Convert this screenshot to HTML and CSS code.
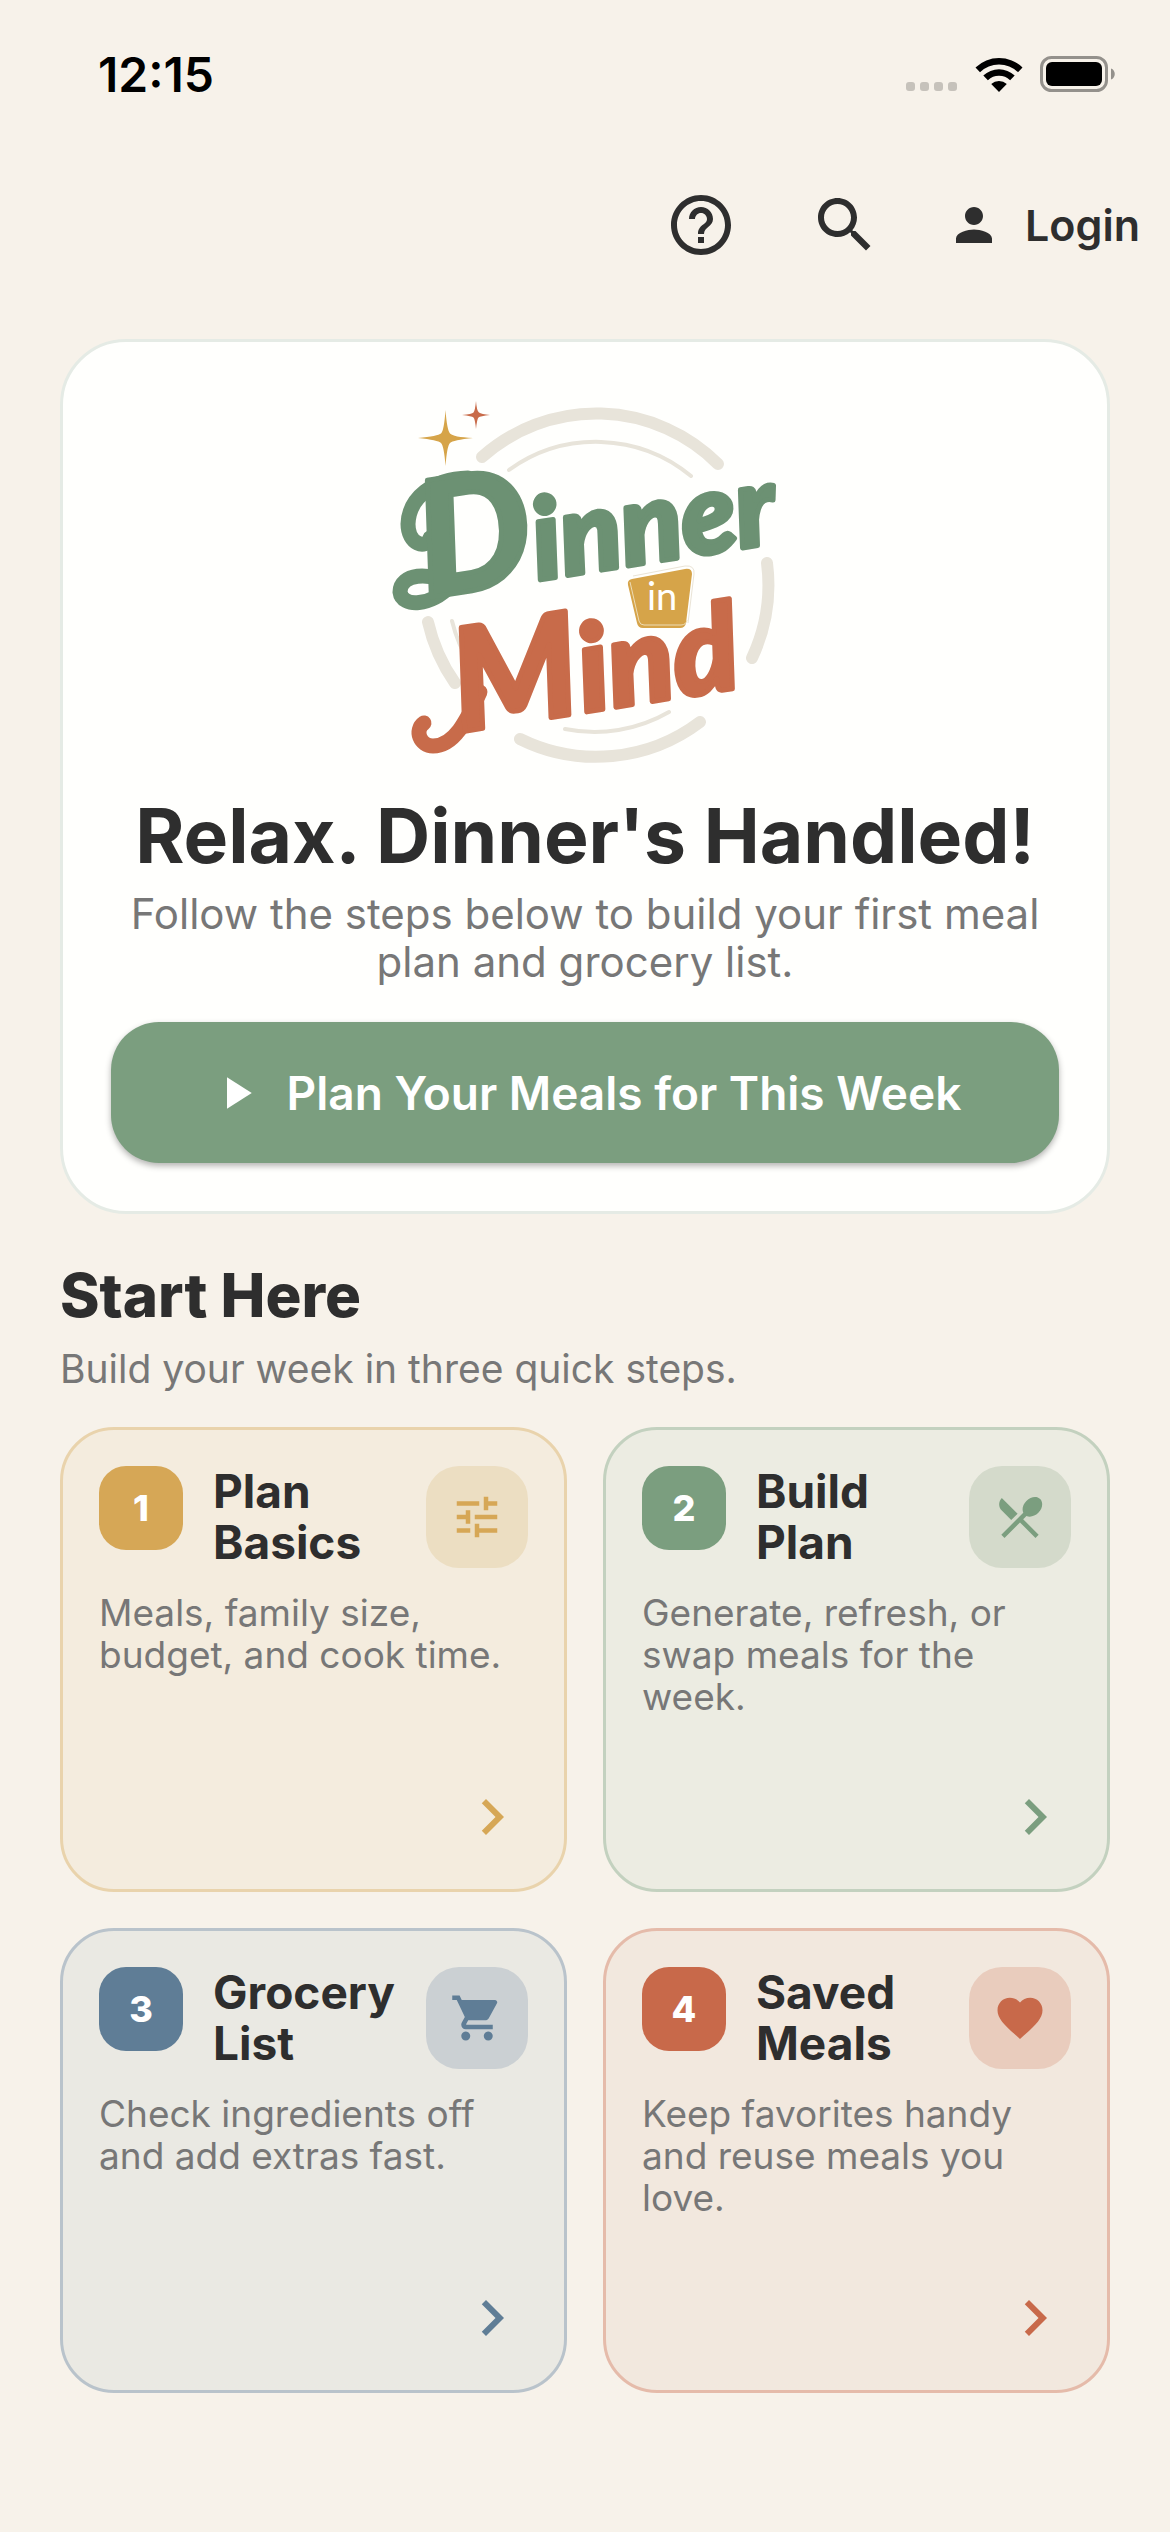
FILE: index.html
```html
<!DOCTYPE html>
<html lang="en">
<head>
<meta charset="utf-8">
<meta name="viewport" content="width=device-width, initial-scale=1">
<title>Dinner in Mind</title>
<link rel="stylesheet" href="styles.css">
</head>
<body>
<div class="status-bar">
  <time class="status-time">12:15</time>
  <div class="status-icons">
    <svg class="signal" viewBox="0 0 52 10" aria-hidden="true"><rect width="9" height="9" rx="3"/><rect x="14" width="9" height="9" rx="3"/><rect x="28" width="9" height="9" rx="3"/><rect x="42" width="9" height="9" rx="3"/></svg>
    <svg class="wifi" viewBox="0 0 50 36" aria-hidden="true"><path d="M1.500 11.500a34 34 0 0 1 47 0l-4.500 4.700a27.500 27.500 0 0 0-38 0zM9.300 19.500a23 23 0 0 1 31.400 0l-4.600 4.700a16.300 16.300 0 0 0-22.200 0zM17.200 28a11.500 11.500 0 0 1 15.600 0L25 36z"/></svg>
    <svg class="battery" viewBox="0 0 76 36" aria-hidden="true"><rect class="battery-case" x="1.500" y="1.500" width="65" height="33" rx="10"/><path class="battery-tip" d="M71 12.500c5 1.500 5 9.500 0 11z"/><rect x="6" y="6" width="56" height="24" rx="6"/></svg>
  </div>
</div>

<header class="app-bar">
  <button class="icon-button" type="button" aria-label="Help"><svg class="icon-lg" viewBox="0 0 24 24" aria-hidden="true"><path d="M11 18h2v-2h-2v2zm1-16C6.480 2 2 6.480 2 12s4.480 10 10 10 10-4.480 10-10S17.520 2 12 2zm0 18c-4.410 0-8-3.590-8-8s3.590-8 8-8 8 3.590 8 8-3.590 8-8 8zm0-14c-2.210 0-4 1.790-4 4h2c0-1.100.9-2 2-2s2 .9 2 2c0 2-3 1.750-3 5h2c0-2.250 3-2.500 3-5 0-2.210-1.790-4-4-4z"/></svg></button>
  <button class="icon-button" type="button" aria-label="Search"><svg class="icon-lg" viewBox="0 0 24 24" aria-hidden="true"><path d="M15.500 14h-.79l-.28-.27C15.410 12.590 16 11.110 16 9.500 16 5.910 13.090 3 9.500 3S3 5.910 3 9.500 5.910 16 9.500 16c1.610 0 3.090-.59 4.230-1.570l.27.28v.79l5 4.990L20.490 19l-4.990-5zm-6 0C7.010 14 5 11.990 5 9.500S7.010 5 9.500 5 14 7.010 14 9.500 11.990 14 9.500 14z"/></svg></button>
  <button class="login-button" type="button"><svg class="icon-md" viewBox="0 0 24 24" aria-hidden="true"><path d="M12 12c2.210 0 4-1.790 4-4s-1.790-4-4-4-4 1.790-4 4 1.790 4 4 4zm0 2c-2.670 0-8 1.340-8 4v2h16v-2c0-2.660-5.330-4-8-4z"/></svg>Login</button>
</header>

<main class="page">
  <section class="hero">
    <svg class="logo" viewBox="0 10 430 384" role="img" aria-label="Dinner in Mind">
      <g class="plate">
        <path d="M112 77A172 172 0 0 1 348 84M397 183A172 172 0 0 1 382 278M330 342A172 172 0 0 1 150 359M85 303A172 172 0 0 1 58 242"/>
      </g>
      <g class="plate plate-inner">
        <path d="M139 90A149 149 0 0 1 321 96M299 332A149 149 0 0 1 195 349M100 284A149 149 0 0 1 82 241"/>
      </g>
      <path class="gold" d="M75.500 30Q77 50 80 53.500T103 58Q83 60 80 63T75.500 86Q74 66 71 63T48 58Q68 56 71 53.500T75.500 30z"/>
      <path class="terra" d="M106 21Q106.700 31 109 32.500T120 35Q110 36 108.500 37.500T106 49Q105 39 103.500 37.500T92 35Q102 34 103.500 32.500T106 21z"/>
      <path class="swash swash-green" d="M60 158C56 170 38 164 38 144C39 118 62 99 98 98M80 206C60 190 30 194 30 212C32 228 62 226 80 206"/>
      <path class="swash swash-terra" d="M54 343C44 350 50 366 63 366C84 366 96 342 110 312"/>
      <g class="lettering">
        <text class="word-green" transform="translate(56 218) rotate(-9)"><tspan class="cap-d">D</tspan><tspan class="lower-d">inner</tspan></text>
        <text class="word-terra" transform="translate(90 352) rotate(-9)"><tspan class="cap-m">M</tspan><tspan class="lower-m">ind</tspan></text>
      </g>
      <path class="cup-edge" d="M263 196L315 186Q325 185 324 194L318 243"/>
      <path class="gold" d="M262 199L315 189Q322 188 322 194L316 243Q315 248 310 248H273Q268 248 267 243L258 205Q257 200 262 199z"/>
      <path class="cup-line" d="M260 202L269 241Q270 245 274 245H311Q316 245 317 240"/>
      <text class="word-in" x="277" y="230">in</text>
    </svg>
    <h1 class="hero-title">Relax. Dinner's Handled!</h1>
    <p class="hero-text">Follow the steps below to build your first meal plan and grocery list.</p>
    <button class="primary-button" type="button"><svg class="icon-md" viewBox="0 0 24 24" aria-hidden="true"><path d="M8 5v14l11-7z"/></svg>Plan Your Meals for This Week</button>
  </section>

  <section class="start">
    <h2 class="start-title">Start Here</h2>
    <p class="start-text">Build your week in three quick steps.</p>
    <div class="steps">
      <a class="step step-gold" href="#basics">
        <div class="step-head">
          <span class="step-number">1</span>
          <h3 class="step-title">Plan Basics</h3>
          <span class="step-tile"><svg class="icon-md" viewBox="0 0 24 24" aria-hidden="true"><path d="M3 17v2h6v-2H3zM3 5v2h10V5H3zm10 16v-2h8v-2h-8v-2h-2v6h2zM7 9v2H3v2h4v2h2V9H7zm14 4v-2H11v2h10zm-6-4h2V7h4V5h-4V3h-2v6z"/></svg></span>
        </div>
        <p class="step-text">Meals, family size, budget, and cook time.</p>
        <svg class="icon-lg step-arrow" viewBox="0 0 24 24" aria-hidden="true"><path d="M10 6L8.590 7.410 13.170 12l-4.580 4.590L10 18l6-6z"/></svg>
      </a>
      <a class="step step-green" href="#plan">
        <div class="step-head">
          <span class="step-number">2</span>
          <h3 class="step-title">Build Plan</h3>
          <span class="step-tile"><svg class="icon-md" viewBox="0 0 24 24" aria-hidden="true"><path d="M8.100 13.340l2.830-2.830L3.910 3.500c-1.560 1.560-1.560 4.090 0 5.660l4.190 4.180zm6.780-1.810c1.530.71 3.680.21 5.270-1.380 1.910-1.910 2.280-4.650.81-6.120-1.460-1.460-4.200-1.100-6.120.81-1.590 1.590-2.090 3.740-1.380 5.270L3.700 19.870l1.410 1.410L12 14.410l6.880 6.880 1.410-1.410L13.410 13l1.470-1.470z"/></svg></span>
        </div>
        <p class="step-text">Generate, refresh, or swap meals for the week.</p>
        <svg class="icon-lg step-arrow" viewBox="0 0 24 24" aria-hidden="true"><path d="M10 6L8.590 7.410 13.170 12l-4.580 4.590L10 18l6-6z"/></svg>
      </a>
      <a class="step step-blue" href="#grocery">
        <div class="step-head">
          <span class="step-number">3</span>
          <h3 class="step-title">Grocery List</h3>
          <span class="step-tile"><svg class="icon-md" viewBox="0 0 24 24" aria-hidden="true"><path d="M7 18c-1.100 0-1.990.9-1.990 2S5.900 22 7 22s2-.9 2-2-.9-2-2-2zM1 2v2h2l3.600 7.590-1.350 2.450c-.16.28-.25.61-.25.96 0 1.100.9 2 2 2h12v-2H7.420c-.14 0-.25-.11-.25-.25l.03-.12.9-1.630h7.450c.75 0 1.410-.41 1.750-1.030l3.580-6.490c.08-.14.12-.31.12-.48 0-.55-.45-1-1-1H5.210l-.94-2H1zm16 16c-1.100 0-1.990.9-1.990 2s.89 2 1.990 2 2-.9 2-2-.9-2-2-2z"/></svg></span>
        </div>
        <p class="step-text">Check ingredients off and add extras fast.</p>
        <svg class="icon-lg step-arrow" viewBox="0 0 24 24" aria-hidden="true"><path d="M10 6L8.590 7.410 13.170 12l-4.580 4.590L10 18l6-6z"/></svg>
      </a>
      <a class="step step-terra" href="#saved">
        <div class="step-head">
          <span class="step-number">4</span>
          <h3 class="step-title">Saved Meals</h3>
          <span class="step-tile"><svg class="icon-md" viewBox="0 0 24 24" aria-hidden="true"><path d="M12 21.350l-1.450-1.320C5.400 15.360 2 12.280 2 8.500 2 5.420 4.420 3 7.500 3c1.740 0 3.410.81 4.500 2.090C13.090 3.810 14.760 3 16.500 3 19.580 3 22 5.420 22 8.500c0 3.780-3.400 6.860-8.550 11.540L12 21.350z"/></svg></span>
        </div>
        <p class="step-text">Keep favorites handy and reuse meals you love.</p>
        <svg class="icon-lg step-arrow" viewBox="0 0 24 24" aria-hidden="true"><path d="M10 6L8.590 7.410 13.170 12l-4.580 4.590L10 18l6-6z"/></svg>
      </a>
    </div>
  </section>
</main>
</body>
</html>
```
FILE: styles.css
```css
:root {
  --bg: #f7f2ea;
  --ink: #2e2e2e;
  --muted: #777777;
  --green: #7b9e7f;
}
* { box-sizing: border-box; }
body {
  margin: 0;
  background: var(--bg);
  color: var(--ink);
  font-family: Inter, "Liberation Sans", sans-serif;
}
h1, h2, h3, p { margin: 0; }
button { border: 0; background: none; color: inherit; font-family: inherit; cursor: pointer; }
svg { display: block; flex: none; fill: currentColor; }
.icon-lg { width: 72px; height: 72px; }
.icon-md { width: 54px; height: 54px; }

.status-bar {
  display: flex;
  justify-content: space-between;
  align-items: center;
  height: 148px;
  padding: 0 54px 0 98px;
  color: #000000;
}
.status-time { font-size: 48px; font-weight: 600; }
.status-icons { display: flex; align-items: center; gap: 16px; }
.signal { width: 52px; height: 10px; align-self: flex-end; fill: #c6c2bb; }
.wifi { width: 50px; height: 36px; }
.battery { width: 76px; height: 36px; }
.battery-case { fill: none; stroke: #94918c; stroke-width: 3; }
.battery-tip { fill: #94918c; }

.app-bar {
  display: flex;
  justify-content: flex-end;
  align-items: center;
  height: 154px;
  padding-right: 30px;
}
.icon-button { display: grid; place-items: center; width: 144px; height: 144px; padding: 0; }
.login-button {
  display: flex;
  align-items: center;
  gap: 24px;
  height: 144px;
  padding: 0 0 0 30px;
  font-size: 43px;
  font-weight: 600;
}

.page { padding: 37px 60px 120px; }
.hero {
  display: flex;
  flex-direction: column;
  align-items: center;
  padding: 48px;
  border: 3px solid #e5ebe5;
  border-radius: 66px;
  background: #fffffd;
  text-align: center;
}
.logo { width: 430px; height: 384px; margin-bottom: 20px; }
.plate { fill: none; stroke: #e8e4da; stroke-width: 12; stroke-linecap: round; }
.plate-inner { stroke-width: 4; }
.gold { fill: #d6a449; }
.terra { fill: #c86b4a; }
.swash { fill: none; stroke-width: 15; stroke-linecap: round; stroke-linejoin: round; }
.swash-green { stroke: #6c9173; }
.swash-terra { stroke: #c86b4a; }
.lettering {
  font-family: Lato, sans-serif;
  font-weight: 900;
  font-style: italic;
  stroke-width: 5;
  stroke-linejoin: round;
}
.word-green { fill: #6c9173; stroke: #6c9173; }
.word-terra { fill: #c86b4a; stroke: #c86b4a; }
.cap-d { font-size: 160px; }
.lower-d { font-size: 112px; }
.cap-m { font-size: 142px; }
.lower-m { font-size: 120px; }
.cup-edge { fill: none; stroke: #eae4d6; stroke-width: 1; }
.cup-line { fill: none; stroke: #eddcb6; stroke-width: 1; }
.word-in { font-family: Lato, sans-serif; font-size: 38px; fill: #ffffff; }

.hero-title { font-size: 75px; line-height: 84px; font-weight: 700; }
.hero-text { margin: 12px 0 36px; color: var(--muted); font-size: 42px; line-height: 48px; }
.primary-button {
  display: flex;
  justify-content: center;
  align-items: center;
  gap: 24px;
  width: 100%;
  min-height: 141px;
  border-radius: 48px;
  background: var(--green);
  box-shadow: 0 3px 6px rgba(0, 0, 0, 0.3);
  color: #ffffff;
  font-size: 46px;
  font-weight: 600;
}

.start { margin-top: 48px; }
.start-title { font-size: 60px; line-height: 66px; font-weight: 800; }
.start-text { margin: 17px 0 34px; color: var(--muted); font-size: 39px; line-height: 48px; }
.steps { display: grid; grid-template-columns: repeat(2, minmax(0, 1fr)); gap: 36px; }
.step {
  display: flex;
  flex-direction: column;
  min-height: 465px;
  padding: 36px;
  border: 3px solid var(--line);
  border-radius: 54px;
  background: var(--fill);
  color: inherit;
  text-decoration: none;
}
.step-gold { --accent: #d6a756; --fill: #f4ecde; --line: #e9d3ac; --tile: #ecdec2; }
.step-green { --accent: #7b9e7f; --fill: #ecece2; --line: #c3d1bf; --tile: #d4dacb; }
.step-blue { --accent: #5f7d96; --fill: #eae9e3; --line: #b9c3cb; --tile: #cbd0d3; }
.step-terra { --accent: #c8694a; --fill: #f2e8de; --line: #e5bbaa; --tile: #e9ccbd; }
.step-head { display: flex; align-items: flex-start; gap: 30px; }
.step-number {
  display: grid;
  place-items: center;
  flex: none;
  width: 84px;
  height: 84px;
  border-radius: 27px;
  background: var(--accent);
  color: #ffffff;
  font-size: 36px;
  font-weight: 800;
}
.step-title { flex: 1; min-width: 0; font-size: 46px; line-height: 51px; font-weight: 700; }
.step-tile {
  display: grid;
  place-items: center;
  flex: none;
  width: 102px;
  height: 102px;
  border-radius: 33px;
  background: var(--tile);
  color: var(--accent);
}
.step-text { margin-top: 24px; color: var(--muted); font-size: 37px; line-height: 42px; }
.step-arrow { margin-top: auto; align-self: flex-end; color: var(--accent); }
```
